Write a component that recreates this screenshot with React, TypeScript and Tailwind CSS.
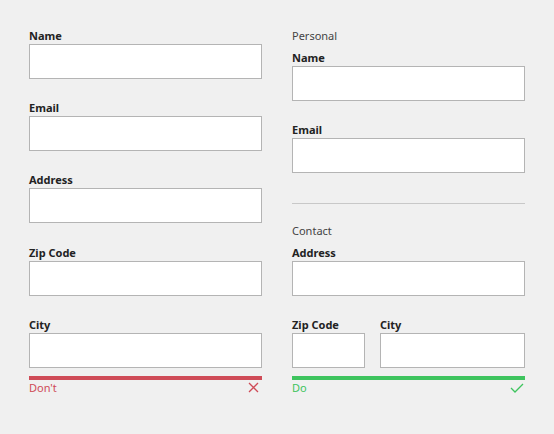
const font = { fontFamily: '"Noto Sans", "Open Sans", sans-serif' };

const Field = ({ label, className = '' }: { label: string; className?: string }) => (
  <div className={`flex flex-col ${className}`}>
    <label className="h-[14px] text-[11px] leading-[14px] font-bold text-[#222]">{label}</label>
    <div className="mt-px h-[35px] bg-white border border-[#b4b4b4]" />
  </div>
);

const Heading = ({ children }: { children: string }) => (
  <div className="h-[14px] text-[11px] leading-[14px] text-[#444] mb-2">{children}</div>
);

export default function App() {
  return (
    <div className="w-[554px] h-[434px] bg-[#f0f0f0] pt-[29px] pl-[29px]" style={font}>
      <div className="flex gap-[30px]">
        {/* Don't */}
        <div className="w-[233px] flex flex-col">
          <Field label="Name" />
          <Field label="Email" className="mt-[22px]" />
          <Field label="Address" className="mt-[22px]" />
          <Field label="Zip Code" className="mt-[23px]" />
          <Field label="City" className="mt-[22px]" />
          <div className="mt-2 h-[3.5px] bg-[#cf4b57]" />
          <div className="mt-px flex items-center justify-between text-[11px] leading-[14px] text-[#cf4b57]">
            <span>Don't</span>
            <svg width="11" height="11" viewBox="0 0 11 11" className="mr-[3px]">
              <path d="M1 1 L10 10 M10 1 L1 10" stroke="#cf4b57" strokeWidth="1.3" fill="none" />
            </svg>
          </div>
        </div>

        {/* Do */}
        <div className="w-[233px] flex flex-col">
          <Heading>Personal</Heading>
          <Field label="Name" />
          <Field label="Email" className="mt-[22px]" />
          <div className="mt-[30px] h-px bg-[#c8c8c8]" />
          <div className="mt-[20px]">
            <Heading>Contact</Heading>
          </div>
          <Field label="Address" />
          <div className="mt-[22px] flex gap-[15px]">
            <Field label="Zip Code" className="w-[73px]" />
            <Field label="City" className="flex-1" />
          </div>
          <div className="mt-2 h-[3.5px] bg-[#3ec45e]" />
          <div className="mt-px flex items-center justify-between text-[11px] leading-[14px] text-[#3ec45e]">
            <span>Do</span>
            <svg width="14" height="10" viewBox="0 0 14 10" className="mr-px">
              <path d="M1 5 L5 9 L13 1" stroke="#3ec45e" strokeWidth="1.3" fill="none" />
            </svg>
          </div>
        </div>
      </div>
    </div>
  );
}
